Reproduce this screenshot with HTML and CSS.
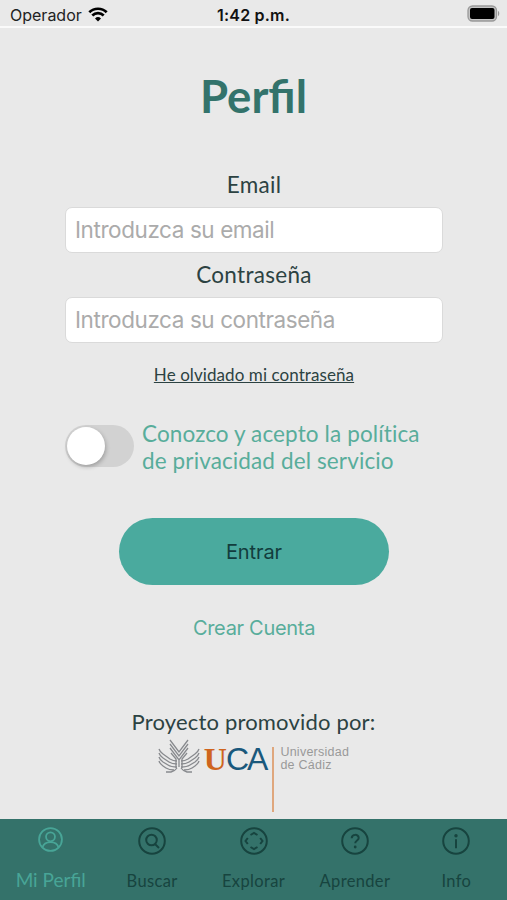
FILE: index.html
```
<!DOCTYPE html>
<html lang="es">
<head>
  <meta charset="UTF-8">
  <title>Perfil</title>
  <link rel="stylesheet" href="styles.css">
</head>
<body>
  <div class="status-bar">
    <div class="carrier">
      <span>Operador</span>
      <svg class="wifi" viewBox="0 0 20 15">
        <path d="M1.3 5.3a12.4 12.4 0 0 1 17.4 0" />
        <path d="M4.3 8.5a8.1 8.1 0 0 1 11.4 0" />
        <path class="dot" d="M10 14.6l-3-3.1a4.3 4.3 0 0 1 6 0z" />
      </svg>
    </div>
    <span class="time">1:42 p.m.</span>
    <svg class="battery" viewBox="0 0 33 17">
      <rect class="shell" x="1" y="1" width="28.5" height="15" rx="4.5" />
      <rect x="3" y="3" width="24.5" height="11" rx="2" />
      <path class="tip" d="M31 6c1.7.6 1.7 4.4 0 5z" />
    </svg>
  </div>

  <main class="profile">
    <h1 class="title">Perfil</h1>

    <form class="form">
      <label class="label" for="email">Email</label>
      <input class="field" type="email" id="email" placeholder="Introduzca su email">
      <label class="label label-password" for="password">Contraseña</label>
      <input class="field" type="password" id="password" placeholder="Introduzca su contraseña">
      <a class="forgot" href="#">He olvidado mi contraseña</a>

      <div class="policy">
        <button class="switch" type="button" role="switch" aria-checked="false"><span class="knob"></span></button>
        <p class="policy-text">Conozco y acepto la política<br>de privacidad del servicio</p>
      </div>

      <button class="enter" type="button">Entrar</button>
      <a class="create" href="#">Crear Cuenta</a>
    </form>

    <div class="sponsor">
      <p class="sponsor-text">Proyecto promovido por:</p>
      <div class="logo">
        <svg class="emblem" viewBox="0 0 42 34">
          <path d="M1 10q1 3 4 5l7 5q3 2 7 2M1 14q1 3 4 5l6 4q3 2 8 2M1 18q1 3 4 5l5 3q3 2 9 2M1 22q1 3 4 5l3 2q3 2 8 2M8 33h5q4-1 6-4" />
          <path d="M41 10q-1 3-4 5l-7 5q-3 2-7 2M41 14q-1 3-4 5l-6 4q-3 2-8 2M41 18q-1 3-4 5l-5 3q-3 2-9 2M41 22q-1 3-4 5l-3 2q-3 2-8 2M34 33h-5q-4-1-6-4" />
          <path d="M12 1l9 12 9-12M12 5l9 12 9-12M12 9l9 12 9-12M13 14l5 6v9M29 14l-5 6v9M21 20v8" />
        </svg>
        <span class="uca"><span class="uca-u">U</span><span class="uca-ca">CA</span></span>
        <span class="divider"></span>
        <span class="university">Universidad<br>de Cádiz</span>
      </div>
    </div>
  </main>

  <nav class="tabs">
    <a class="tab active" href="#">
      <svg class="icon" viewBox="0 0 28 28">
        <circle cx="14" cy="14" r="12.8" />
        <circle cx="14" cy="11" r="5" />
        <path d="M5 23c2-8 16-8 18 0" />
      </svg>
      <span>Mi Perfil</span>
    </a>
    <a class="tab" href="#">
      <svg class="icon" viewBox="0 0 28 28">
        <circle cx="14" cy="14" r="12.8" />
        <circle cx="13.5" cy="13" r="5.3" />
        <path d="M17 17l4 4" />
      </svg>
      <span>Buscar</span>
    </a>
    <a class="tab" href="#">
      <svg class="icon" viewBox="0 0 28 28">
        <circle cx="14" cy="14" r="12.8" />
        <path d="M7.8 11L5.5 14l2.300 3M20.200 11l2.300 3-2.300 3M10.500 8L14 6l3.500 2M10.500 20l3.500 2 3.500-2" />
      </svg>
      <span>Explorar</span>
    </a>
    <a class="tab" href="#">
      <svg class="icon" viewBox="0 0 28 28">
        <circle cx="14" cy="14" r="12.8" />
        <path d="M10.700 11.300c0-4.600 7-4.400 7-.4 0 2.600-3.500 2.500-3.500 5.400" />
        <circle class="point" cx="14.200" cy="20" r="1.400" />
      </svg>
      <span>Aprender</span>
    </a>
    <a class="tab" href="#">
      <svg class="icon" viewBox="0 0 28 28">
        <circle cx="14" cy="14" r="12.8" />
        <path d="M14 12.300v9" />
        <circle class="point" cx="14" cy="8.700" r="1.700" />
      </svg>
      <span>Info</span>
    </a>
  </nav>
</body>
</html>
```
FILE: styles.css
```
* {
  box-sizing: border-box;
}
body {
  margin: 0;
  height: 900px;
  display: flex;
  flex-direction: column;
  background: #e9e9e9;
  color: #2c4242;
  font-family: Lato, sans-serif;
}
a {
  color: inherit;
  text-decoration: none;
}
p {
  margin: 0;
}

/* status bar */
.status-bar {
  display: grid;
  grid-template-columns: 1fr auto 1fr;
  align-items: center;
  height: 28px;
  padding: 2px 7px 0 10px;
  border-bottom: 2px solid #fafafa;
  font: 16px/26px Inter, sans-serif;
  color: #222;
}
.carrier {
  display: flex;
  align-items: center;
  gap: 6px;
}
.wifi {
  width: 20px;
  height: 15px;
  margin-top: -2px;
  fill: none;
  stroke: #000;
  stroke-width: 2.7;
}
.wifi .dot {
  fill: #000;
  stroke: none;
}
.time {
  margin-right: 3px;
  font-weight: 600;
  letter-spacing: 0.2px;
  color: #111;
}
.battery {
  width: 33px;
  height: 17px;
  margin-top: -3px;
  justify-self: end;
}
.shell {
  fill: #c4c4c4;
  stroke: #999;
  stroke-width: 1.3;
}
.tip {
  fill: #999;
}

/* profile form */
.profile {
  flex: 1;
  display: flex;
  flex-direction: column;
  align-items: center;
}
.title {
  margin: 41px 0 0;
  font-size: 45.5px;
  line-height: 54px;
  color: #33736b;
}
.form {
  display: flex;
  flex-direction: column;
  align-items: center;
  width: 378px;
  margin-top: 48px;
  margin-left: 1px;
}
.label {
  margin-bottom: 8px;
  font-size: 22.5px;
  line-height: 28px;
  letter-spacing: 0.3px;
}
.label-password {
  margin-top: 8px;
}
.field {
  width: 378px;
  height: 46px;
  padding: 0 9px 1px;
  border: 1px solid #dadada;
  border-radius: 7px;
  background: #fff;
  font: 22.5px Inter, sans-serif;
  letter-spacing: -0.42px;
}
.field::placeholder {
  color: #ababab;
}
.forgot {
  margin-top: 21px;
  font-size: 17px;
  line-height: 22px;
  letter-spacing: 0.08px;
  text-decoration: underline;
}
.policy {
  display: flex;
  align-items: center;
  gap: 8px;
  align-self: flex-start;
  margin-top: 34px;
  height: 54px;
}
.switch {
  width: 69px;
  height: 42px;
  margin-top: -2px;
  padding: 2px;
  border: none;
  border-radius: 21px;
  background: #d2d2d2;
}
.knob {
  display: block;
  width: 38px;
  height: 38px;
  border-radius: 50%;
  background: #fff;
  box-shadow: 1px 2px 4px rgba(0, 0, 0, 0.25);
}
.policy-text {
  font-size: 22.5px;
  line-height: 27px;
  letter-spacing: 0.12px;
  color: #58ad9b;
  white-space: nowrap;
}
.enter {
  width: 270px;
  height: 67px;
  margin-top: 44px;
  border: none;
  border-radius: 34px;
  background: #4aaa9e;
  color: #123d3d;
  font: 20px Inter, sans-serif;
  letter-spacing: -0.1px;
}
.create {
  margin-top: 29px;
  font: 20px/28px Inter, sans-serif;
  letter-spacing: -0.3px;
  color: #58ad9b;
}

/* sponsor logo */
.sponsor {
  display: flex;
  flex-direction: column;
  align-items: center;
  margin-top: 66px;
}
.sponsor-text {
  font-size: 22px;
  line-height: 28px;
  letter-spacing: 0.18px;
}
.logo {
  display: flex;
  align-items: flex-start;
  margin-top: 3px;
}
.emblem {
  width: 42px;
  height: 34px;
  fill: none;
  stroke: #888a8e;
  stroke-width: 1.3;
}
.uca {
  display: flex;
  margin: 4px 0 0 4px;
  font: 32px/32px "Liberation Sans", sans-serif;
}
.uca-u {
  font-family: "Liberation Serif", serif;
  font-weight: bold;
  letter-spacing: -1px;
  color: #cf641d;
}
.uca-ca {
  letter-spacing: -2px;
  color: #19587c;
}
.divider {
  width: 2px;
  height: 65px;
  margin: 8px 6px 0 6px;
  background: #dfa77d;
}
.university {
  margin-top: 7px;
  font: 12.5px/13px "Liberation Sans", sans-serif;
  letter-spacing: 0.25px;
  color: #999;
}

/* bottom navigation */
.tabs {
  display: flex;
  height: 81px;
  background: #34726a;
}
.tab {
  flex: 1;
  display: flex;
  flex-direction: column;
  align-items: center;
  padding-top: 8px;
  gap: 15px;
  font-size: 16.5px;
  line-height: 22px;
  letter-spacing: 0.35px;
  color: #17443f;
}
.icon {
  width: 28px;
  height: 28px;
  fill: none;
  stroke: currentColor;
  stroke-width: 2;
}
.point {
  fill: currentColor;
  stroke: none;
}
.active {
  gap: 17px;
  font-size: 19px;
  letter-spacing: normal;
  color: #48a597;
}
.active .icon {
  width: 25px;
  height: 25px;
}
```
